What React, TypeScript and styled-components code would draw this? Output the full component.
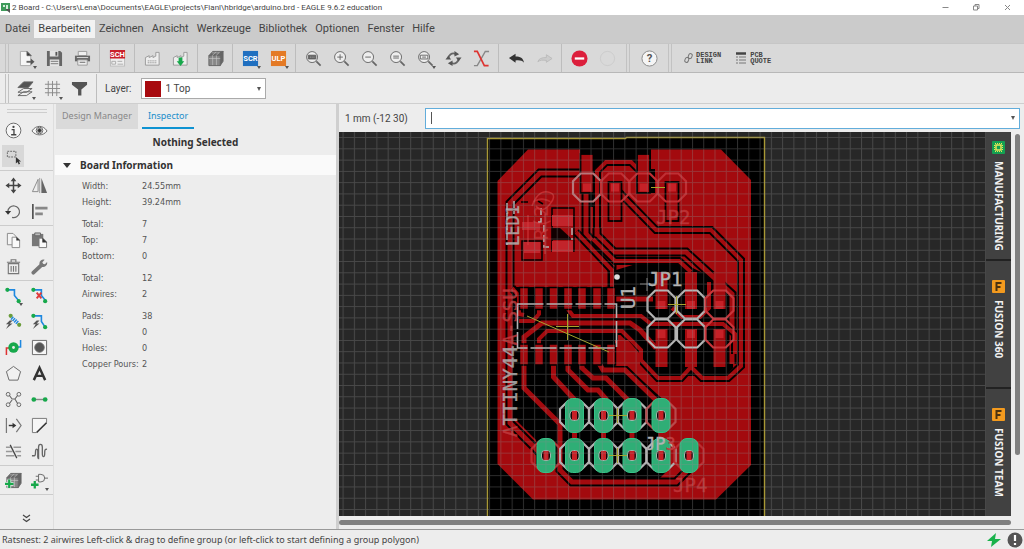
import React from "react";
import styled, { createGlobalStyle, css } from "styled-components";

const ui = 'Roboto, "DejaVu Sans Condensed", "Noto Sans", sans-serif';
const heading = '"Noto Sans", "Open Sans", sans-serif';

const GlobalStyle = createGlobalStyle`
  *, *::before, *::after { box-sizing: border-box; }
  body { margin: 0; font-family: ${ui}; color: #444; background: #ededed; }
  button, input, select { font: inherit; color: inherit; margin: 0; }
  button { border: 0; padding: 0; background: none; }
  svg { display: block; flex: none; }
`;

const Window = styled.div`
  display: flex;
  flex-direction: column;
  height: 100vh;
  overflow: hidden;
`;

const TitleBar = styled.header`
  display: flex;
  align-items: center;
  height: 15px;
  flex: none;
  padding: 0 12px 0 1px;
  gap: 1px;
  background: #fff;
  font-size: 8px;
  line-height: 15px;
  white-space: nowrap;
  h1 { margin: 0; flex: 1; font: inherit; color: #444; }
`;

const WindowButtons = styled.div`
  display: flex;
  gap: 22px;
  color: #888;
`;

const MenuBar = styled.nav`
  display: flex;
  align-items: center;
  height: 28px;
  flex: none;
  padding: 0 1px;
  background: #cbcbcb;
`;

const MenuItem = styled.button<{ $active?: boolean }>`
  height: 18px;
  padding: 0 4px;
  font-size: 11px;
  line-height: 18px;
  color: #444;
  background: ${(p) => (p.$active ? "#f2f2f2" : "transparent")};
`;

const Toolbar = styled.div<{ $light?: boolean }>`
  display: flex;
  align-items: center;
  flex: none;
  height: ${(p) => (p.$light ? "31px" : "30px")};
  padding-left: 5px;
  background: ${(p) => (p.$light ? "#ececec" : "#d9d9d9")};
  border-top: 1px solid ${(p) => (p.$light ? "#ececec" : "#c6c6c6")};
  border-bottom: 1px solid ${(p) => (p.$light ? "#cfcfcf" : "#b8b8b8")};
`;

const Handle = styled.span<{ $gap?: boolean }>`
  align-self: stretch;
  flex: none;
  width: 4px;
  margin: ${(p) => (p.$gap ? "0 5px" : "0 3px 0 0")};
  border: solid #c2c2c2;
  border-width: 0 1px;
`;

const Separator = styled.span`
  align-self: stretch;
  flex: none;
  width: 1px;
  margin: 0 3px;
  background: #bdbdbd;
`;

const ToolButton = styled.button<{ $narrow?: boolean }>`
  display: flex;
  align-items: center;
  justify-content: center;
  position: relative;
  flex: none;
  width: ${(p) => (p.$narrow ? "27px" : "28px")};
  height: 26px;
`;

const DropMark = styled.span`
  position: absolute;
  right: 3px;
  bottom: 2px;
  border: solid transparent;
  border-width: 3px 2px 0;
  border-top-color: #555;
`;

const LinkButton = styled.button`
  display: flex;
  align-items: center;
  gap: 3px;
  height: 26px;
  padding: 0 8px 0 7px;
  font-family: "Liberation Mono", monospace;
  font-size: 7px;
  line-height: 6px;
  font-weight: 700;
  text-align: left;
  white-space: pre;
`;

const LayerLabel = styled.label`
  display: flex;
  align-items: center;
  gap: 9px;
  padding-left: 5px;
  font-size: 10px;
`;

const LayerBox = styled.span`
  display: flex;
  align-items: center;
  width: 125px;
  height: 21px;
  padding: 0 4px 0 3px;
  background: #fff;
  border: 1px solid #aaa;
`;

const Swatch = styled.span`
  flex: none;
  width: 16px;
  height: 16px;
  margin-right: 5px;
  background: #a80a0f;
`;

const LayerSelect = styled.select`
  flex: 1;
  min-width: 0;
  appearance: none;
  border: 0;
  padding: 0;
  background: none;
  font-size: 10px;
  outline: none;
`;

const Arrow = styled.span`
  flex: none;
  border: solid transparent;
  border-width: 4px 2px 0;
  border-top-color: #555;
`;

const Workspace = styled.main`
  display: flex;
  flex: 1;
  min-height: 0;
`;

const Palette = styled.aside`
  display: flex;
  flex-direction: column;
  flex: none;
  width: 54px;
  padding-top: 5px;
  border-right: 1px solid #dedede;
`;

const PaletteGrip = styled.div`
  flex: none;
  height: 4px;
  margin: 0 6px 3px 7px;
  border: solid #cdcdcd;
  border-width: 1px 0;
`;

const ToolGroup = styled.div`
  display: grid;
  flex: none;
  grid-template-columns: 26px 26px;
  grid-auto-rows: 26px;
  padding: 1px 0;
  border-bottom: 1px solid #ccc;
`;

const PaletteButton = styled.button<{ $active?: boolean }>`
  display: flex;
  align-items: center;
  justify-content: center;
  position: relative;
  ${(p) =>
    p.$active &&
    css`
      margin: 2px;
      background: #d8d8d8;
    `}
`;

const MoreButton = styled.button`
  display: flex;
  justify-content: center;
  align-items: center;
  height: 20px;
  margin: auto 0 1px;
`;

const Inspector = styled.section`
  display: flex;
  flex-direction: column;
  flex: none;
  width: 285px;
  padding-left: 1px;
  border-right: 3px solid #cfcfcf;
`;

const TabList = styled.div`
  display: flex;
  gap: 4px;
  height: 25px;
  padding-left: 1px;
`;

const Tab = styled.button<{ $active?: boolean }>`
  padding: 0 6px;
  font-family: ${heading};
  font-size: 9px;
  line-height: 22px;
  color: ${(p) => (p.$active ? "#1b8ecb" : "#888")};
  background: ${(p) => (p.$active ? "none" : "#dadada")};
  border-bottom: 2px solid ${(p) => (p.$active ? "#0f93d2" : "#dadada")};
`;

const PanelTitle = styled.h2`
  margin: 0;
  font-family: ${heading};
  font-size: 10px;
  line-height: 26px;
  text-align: center;
  color: #333;
`;

const SectionHead = styled.button`
  display: flex;
  align-items: center;
  gap: 9px;
  height: 20px;
  padding-left: 8px;
  background: #fafafa;
  font-family: ${heading};
  font-weight: 700;
  font-size: 10px;
  color: #333;
`;

const Facts = styled.dl`
  display: grid;
  grid-template-columns: 60px 1fr;
  grid-auto-rows: 16px;
  margin: 0;
  padding: 6px 0 0 27px;
  font-family: "DejaVu Sans Condensed", "DejaVu Sans", sans-serif;
  font-size: 9px;
  line-height: 16px;
  color: #555;
  white-space: nowrap;
  &:first-of-type { padding-top: 3px; }
  dt, dd { margin: 0; }
`;

const Editor = styled.section`
  display: flex;
  flex-direction: column;
  flex: 1;
  min-width: 0;
`;

const CommandRow = styled.div`
  display: flex;
  align-items: center;
  flex: none;
  height: 28px;
  padding: 0 4px 0 6px;
  font-size: 10px;
`;

const Coordinates = styled.output`
  width: 80px;
  flex: none;
`;

const CommandBox = styled.div`
  display: flex;
  align-items: center;
  flex: 1;
  height: 21px;
  padding: 0 4px 0 5px;
  background: #fff;
  border: 1px solid #62addb;
  &::before { content: ""; width: 1px; height: 12px; background: #555; }
`;

const CommandInput = styled.input`
  flex: 1;
  min-width: 0;
  border: 0;
  outline: none;
  background: none;
  caret-color: transparent;
`;

const Stage = styled.div`
  display: flex;
  flex: 1;
  min-height: 0;
`;

const Canvas = styled.div`
  flex: 1;
  min-width: 0;
  overflow: hidden;
  background: #272727;
`;

const SideTabs = styled.div`
  display: grid;
  grid-auto-rows: 1fr;
  flex: none;
  width: 25px;
  background: #222;
  gap: 2px;
`;

const SideTab = styled.button<{ $inset: number }>`
  display: flex;
  align-items: center;
  gap: 7px;
  padding-top: ${(p) => p.$inset}px;
  writing-mode: vertical-rl;
  font-family: ${heading};
  font-size: 10px;
  line-height: 25px;
  font-weight: 700;
  color: #f2f2f2;
  background: #414141;
  white-space: nowrap;
`;

const VerticalTrack = styled.div`
  flex: none;
  width: 13px;
  padding: 2px 4px 0;
`;

const HorizontalTrack = styled.div`
  flex: none;
  height: 13px;
  padding: 4px 13px 0 0;
`;

const Thumb = styled.div<{ $vertical?: boolean }>`
  height: ${(p) => (p.$vertical ? "84%" : "5px")};
  border-radius: 3px;
  background: #808080;
`;

const StatusBar = styled.footer`
  display: flex;
  align-items: center;
  flex: none;
  height: 20px;
  padding: 0 1px 0 2px;
  gap: 5px;
  border-top: 1px solid #999;
  font-family: ${heading};
  font-size: 9px;
  white-space: nowrap;
  p { flex: 1; margin: 0; }
`;

/* ---------- icons ---------- */

type IconProps = { size?: number; children: React.ReactNode };
const Icon = ({ size = 17, children }: IconProps) => (
  <svg width={size} height={size} viewBox="0 0 18 18" fill="none" stroke="#666" strokeWidth="1" aria-hidden="true">
    {children}
  </svg>
);
const G = "#17a84b";
const B = "#1e88e0";

const Lens = ({ children }: { children?: React.ReactNode }) => (
  <Icon>
    <circle cx="7.5" cy="7.5" r="5.8" fill="#eee" />
    <path d="M12 12l4.5 4.5" strokeWidth="1.8" />
    {children}
  </Icon>
);
const Badge = ({ color, text }: { color: string; text: string }) => (
  <Icon>
    <rect x="1" y="1" width="16" height="16" fill={color} stroke="none" />
    <text x="9" y="12" textAnchor="middle" fontSize="8" fontWeight="700" fill="#fff" stroke="none">{text}</text>
  </Icon>
);
const Factory = ({ arrow }: { arrow?: boolean }) => (
  <Icon>
    <path d="M1.500 16V8l4-2v2l4-2v2l3-1.500V2.500h3.500V16z" fill="#eee" stroke="#999" />
    {arrow ? <path d="M7 8v4H5l4 5 4-5h-2V8z" fill={G} stroke="none" /> : <path d="M4 11.500h9M4 13.500h9" stroke="#777" strokeDasharray="1 1" />}
  </Icon>
);
const Box = ({ plus }: { plus?: boolean }) => (
  <Icon>
    <path d="M2 6l4-4.500h11l-3 4.500zM14 6l3-4.500V12l-3 4.500z" fill="#666" />
    <path d="M2 6h12v10.500H2z" fill="#888" />
    <path d="M5 3l8 0M6 6v10M10 6v10M2 9h12M5.500 6l4-4M9.500 6l4-4" stroke="#ccc" strokeWidth=".6" />
    {plus && <path d="M0 12.500h9M4.500 8v9" stroke="#eee" strokeWidth="4" />}
    {plus && <path d="M0 12.500h9M4.500 8v9" stroke={G} strokeWidth="2.400" />}
  </Icon>
);

const DocIcon = () => <Icon><path d="M2.500 1.500h7l4 4v11h-11z" fill="#f6f6f6" stroke="#aaa" /><path d="M9.500 1.500l4.500 4.500h-4.500z" fill="#333" /><path d="M9 12.500h6" strokeWidth="2" /><path d="M13.500 9l4 3.500-4 3.500z" fill="#555" stroke="none" /></Icon>;
const SaveIcon = () => <Icon><path d="M1 1h14l2 2v14H1z" fill="#666" stroke="none" /><path d="M4 1h9v6H4zM4 10h10v7H4z" fill="#e4e4e4" stroke="none" /><path d="M10 2h2v4h-2z" fill="#555" stroke="none" /><path d="M5 12h8M5 14.500h8" stroke="#777" /></Icon>;
const PrintIcon = () => <Icon><path d="M4.500 1.500h9V6h-9z" fill="#eee" stroke="#999" /><rect x="1" y="6" width="16" height="6" fill="#666" stroke="none" /><path d="M3 8h12" stroke="#ddd" /><path d="M4 10.500h10v5.500H4z" fill="#eee" stroke="#999" /><path d="M6 13h6" /></Icon>;
const SchIcon = () => <Icon><rect x="1.500" y="1" width="15" height="16" fill="#eee" stroke="#bbb" /><rect x="1" y="0" width="16" height="9" fill="#c9202b" stroke="none" /><text x="9" y="7.500" textAnchor="middle" fontSize="8" fontWeight="700" fill="#fff" stroke="none">SCH</text><path d="M3 12h4v3H3zM9 12h5M9 15h6" stroke="#aaa" /></Icon>;
const RefreshIcon = () => <Icon><path d="M3.500 9.500A5.500 5.500 0 0 1 11 4M14.500 8.500A5.500 5.500 0 0 1 7 14" strokeWidth="2" /><path d="M10 1l5 3.500-5 2.500zM8 11l-5 3 5 3zM0.500 10h6L3.500 6zM11.500 8h6l-3 4z" fill="#555" stroke="none" /></Icon>;
const RatsnestIcon = () => <Icon><path d="M1 16.500h3.500L13 1.500h4" stroke="#888" strokeWidth="1.500" /><path d="M1 1.500h3.500L12 16.500h4.500" stroke="#dd3431" strokeWidth="1.800" /></Icon>;
const UndoIcon = ({ muted }: { muted?: boolean }) => <Icon>{muted ? <path d="M17 9l-6-4v3C6 8 3 9 2 12.500c2-2 5-2 9-1.500v2z" fill="#ccc" stroke="#bbb" /> : <path d="M1 8.500l7-4.500v3c5 0 8 1.500 9 6.500-2-2.500-5-3-9-2.500v2.500z" fill="#333" stroke="none" />}</Icon>;
const StopIcon = () => <Icon><circle cx="9" cy="9" r="8.500" fill="#dc1f3c" stroke="none" /><path d="M4 9h10" stroke="#fff" strokeWidth="2.400" /></Icon>;
const GoIcon = () => <Icon><circle cx="9" cy="9" r="7.500" stroke="#cbcbcb" /></Icon>;
const HelpIcon = () => <Icon><circle cx="9" cy="9" r="8" fill="#f5f5f5" stroke="#888" /><text x="9" y="13" textAnchor="middle" fontSize="12" fontWeight="700" fill="#555" stroke="none">?</text></Icon>;
const LayersIcon = () => <Icon><path d="M1 16.500l6-4h9l-6 4zM1 13l6-4h9l-6 4z" fill="#eee" /><path d="M1 8l6-6h10l-5 6z" fill="#555" /></Icon>;
const GridIcon = () => <Icon><path d="M4.500 1v16M9 1v16M13.500 1v16M1 4.500h16M1 9h16M1 13.500h16" stroke="#888" /></Icon>;
const FunnelIcon = () => <Icon><path d="M1 2h16v3l-6 5v6.500H7.500V10L1 5z" fill="#555" stroke="none" /></Icon>;

const paletteGroups: { name: string; icon: React.ReactNode; active?: boolean; drop?: boolean }[][] = [
  [
    { name: "Info", icon: <Icon><circle cx="9" cy="9" r="7.800" fill="#f6f6f6" /><circle cx="9" cy="5.200" r="1.200" fill="#444" stroke="none" /><path d="M7 8h2.500v5.500M6.500 13.500h5.500" stroke="#444" strokeWidth="1.400" /></Icon> },
    { name: "Show", icon: <Icon><path d="M1 9.500c4-6.500 12-6.500 16 0-4 5.500-12 5.500-16 0z" fill="#f6f6f6" /><circle cx="9" cy="9" r="3.500" /><circle cx="9" cy="9" r="2" fill="#333" /></Icon> },
    { name: "Group", active: true, icon: <Icon><path d="M2.500 3.500h9v6h-9z" stroke="#666" strokeDasharray="2 1" /><path d="M11.500 9.500v7l1.800-1.600 1.200 2.600 1.500-.8-1.300-2.500h2.300z" fill="#333" stroke="none" /></Icon> },
  ],
  [
    { name: "Move", icon: <Icon><path d="M9 3v12M3 9h12" strokeWidth="1.600" stroke="#444" /><path d="M9 0.500l3 4H6zM9 17.500l3-4H6zM.5 9l4-3v6zM17.500 9l-4-3v6z" fill="#444" stroke="none" /></Icon> },
    { name: "Mirror", icon: <Icon><path d="M7.500 2.500v13h-6z" stroke="#888" /><path d="M11 1v16h6z" fill="#666" stroke="none" /><path d="M9.200 1v16" stroke="#999" /></Icon> },
    { name: "Rotate", icon: <Icon><path d="M3 9a6.200 6.200 0 1 1 4.500 6.300" strokeWidth="1.300" /><path d="M0 8.500h6.500L3.200 12.500z" fill="#333" stroke="none" /></Icon> },
    { name: "Align", icon: <Icon><path d="M2 1v16" stroke="#333" strokeWidth="1.500" /><path d="M4.500 5.500h13M4.500 11.500h8" stroke="#888" strokeWidth="3" /></Icon> },
  ],
  [
    { name: "Copy", icon: <Icon><path d="M2.500 1.500h6l3 3v9h-9z" fill="#f4f4f4" stroke="#888" /><path d="M7.500 5.500h5l3 3v8h-8z" fill="#fafafa" stroke="#888" /><path d="M12 5l4 4h-4z" fill="#333" stroke="none" /></Icon> },
    { name: "Paste", icon: <Icon><path d="M1 2h12v13H1z" fill="#777" stroke="none" /><path d="M4 1h6v3H4z" fill="#bbb" stroke="#666" /><path d="M8.500 6.500h4l4 4v6h-8z" fill="#fafafa" stroke="#777" /><path d="M12 6l5 5h-5z" fill="#333" stroke="none" /></Icon> },
    { name: "Delete", icon: <Icon><path d="M3.500 6h11v10.500h-11zM2 4.500h14M6.500 4V1.800h5V4M6.500 8.500v6M9 8.500v6M11.500 8.500v6" stroke="#777" strokeWidth="1.200" /></Icon> },
    { name: "Change", icon: <Icon><path d="M2.500 15.500L11 7.500" strokeWidth="4" stroke="#777" strokeLinecap="round" /><path d="M15.500 2.500L12.500 6M9 6.500A4.200 4.200 0 0 1 14.500 1.800L12 4.500l.7 1.700 2 .5 2.300-2.500A4.200 4.200 0 0 1 11 9z" fill="#777" stroke="none" /></Icon> },
  ],
  [
    { name: "Route", drop: true, icon: <Icon><path d="M2 3h8v6l5 6" stroke={B} strokeWidth="1.700" /><circle cx="2.500" cy="3" r="2.200" fill={G} stroke="none" /><circle cx="14.500" cy="15" r="2.200" fill={G} stroke="none" /></Icon> },
    { name: "Ripup", icon: <Icon><path d="M2 3h9v6l5 6" stroke={B} strokeWidth="1.700" /><circle cx="2.500" cy="3" r="2.200" fill={G} stroke="none" /><circle cx="15" cy="15" r="2.200" fill={G} stroke="none" /><path d="M6 6l5 6M11 6l-5 6" stroke="#df3b3b" strokeWidth="2" /></Icon> },
    { name: "Quick route", icon: <Icon><circle cx="6" cy="3" r="2.200" fill="#6a9c3b" stroke="none" /><circle cx="15" cy="12.500" r="2.200" fill="#6a9c3b" stroke="none" /><path d="M7 5l7 6" stroke={B} strokeWidth="4" strokeDasharray="1.500 .8" /><path d="M5 8l-4 4h3l-3 5 7-6H5l3-3z" fill="#555" stroke="none" /></Icon> },
    { name: "Quick airwire", icon: <Icon><path d="M2 3h9v6l4 6" stroke={B} strokeWidth="1.700" /><circle cx="2.500" cy="3" r="2.200" fill={G} stroke="none" /><circle cx="15" cy="15" r="2.200" fill={G} stroke="none" /><path d="M6 8l-4 4h3l-3 5 7-6H6l3-3z" fill="#555" stroke="none" /></Icon> },
    { name: "Via", icon: <Icon><path d="M1.500 17V9.500H6" stroke="#d33" strokeWidth="1.600" /><path d="M16.500 1v7.500H12" stroke={B} strokeWidth="1.600" /><circle cx="9" cy="9" r="5.500" fill={G} stroke="none" /><circle cx="9" cy="9" r="1.500" fill="#eee" stroke="none" /></Icon> },
    { name: "Hole", icon: <Icon><path d="M1.500 1.500h15v15h-15z" fill="#f6f6f6" /><circle cx="9" cy="9" r="5" fill="#555" /></Icon> },
    { name: "Polygon", icon: <Icon><path d="M9 1.500l7.500 5.500-2.800 9H4.300L1.500 7z" fill="#f1f1f1" /></Icon> },
    { name: "Text", icon: <Icon><path d="M3 16L9 3l6 13M5.500 11.500h7" strokeWidth="2.600" stroke="#333" /></Icon> },
    { name: "Fanout", icon: <Icon><path d="M4.500 4.500l3 4h3l3-4M4.500 13.500l3-4M13.500 13.500l-3-5" strokeWidth="1.200" /><circle cx="3.300" cy="3.500" r="2" /><circle cx="14.700" cy="3.500" r="2" /><circle cx="3.300" cy="14.500" r="2" /><circle cx="14.700" cy="14.500" r="2" /></Icon> },
    { name: "Signal", icon: <Icon><path d="M3 9h12" stroke="#888" strokeWidth="1.500" /><circle cx="3" cy="9" r="2.500" fill={G} stroke="none" /><circle cx="15" cy="9" r="2.500" fill={G} stroke="none" /></Icon> },
    { name: "Split", icon: <Icon><path d="M1.500 1v16M12 2l5 7-5 7" stroke="#777" strokeWidth="1.300" /><path d="M4 9h5" stroke="#333" strokeWidth="1.500" /><path d="M8 6l4 3-4 3z" fill="#333" stroke="none" /></Icon> },
    { name: "Miter", icon: <Icon><path d="M1.500 16.500v-15h15v4l-11 11z" fill="#f6f6f6" stroke="#777" /><path d="M6 16.500L16.500 6" stroke="#333" strokeWidth="1.500" /></Icon> },
    { name: "Slice", icon: <Icon><path d="M1 4.500h5M9 4.500h8M1 9h7M11 9h6M1 13.500h9M13 13.500h4" stroke="#999" strokeWidth="1.500" /><path d="M5.500 2l7 14" stroke="#444" strokeWidth="1.300" /></Icon> },
    { name: "Meander", icon: <Icon><path d="M1 13.500h2.500c2.500 0 0-7 2.500-7s0 10 2 10V4.500c0-4 4-4 4 0v7c0 4 2.500 4 2.500 0s0-5 2.500-5" stroke="#666" strokeWidth="1.400" /></Icon> },
  ],
  [
    { name: "Add part", icon: <Box plus /> },
    { name: "Add gate", drop: true, icon: <Icon><path d="M8 2.500h2.500a3.500 3.500 0 0 1 0 8H8zM5 4.500h3M5 8.500h3M14 6.500h4" /><path d="M0 13.500h8M4 9.500v8" stroke={G} strokeWidth="2.400" /></Icon> },
  ],
];

const ChipIcon = () => <svg width="13" height="13" viewBox="0 0 13 13"><rect width="13" height="13" rx="1" fill="#14a052" /><rect x="4" y="4" width="5" height="5" fill="none" stroke="#e8e65a" strokeWidth="1.500" /><path d="M3 2.500h7M3 10.500h7M2.500 4v5M10.500 4v5" stroke="#e8e65a" strokeDasharray="1 1" /></svg>;
const FusionIcon = () => <svg width="13" height="13" viewBox="0 0 13 13"><rect width="13" height="13" rx="1" fill="#f39a1e" /><path d="M4.500 11V3h5M4.500 7h4" fill="none" stroke="#4b3210" strokeWidth="2" /></svg>;

/* ---------- board drawing ---------- */

const RED = "#a30a0e";
const SILK = "#b4b4b4";

const Trace = ({ d, w = 5 }: { d: string; w?: number }) => (
  <g fill="none" strokeLinejoin="miter">
    <path d={d} stroke="#050000" strokeWidth={w + 4} />
    <path d={d} stroke={RED} strokeWidth={w} />
  </g>
);
const octagon = (x: number, y: number, r = 14) => {
  const k = r * 0.45;
  return `M${x - k} ${y - r}h${2 * k}l${r - k} ${r - k}v${2 * k}l${k - r} ${r - k}h${-2 * k}l${k - r} ${k - r}v${-2 * k}z`;
};
const upperPads = [574.5, 603.5, 632, 661];
const lowerPads = [546, 574.5, 603.5, 632, 661, 689];
const pins = [524, 539, 553.5, 568, 582, 597, 611];
const jp1 = [661.5, 691, 719.5];
const jp2 = [587, 615, 643.5, 672];

const ThroughPad = ({ x, y }: { x: number; y: number }) => (
  <g>
    <rect x={x - 9} y={y - 17} width="18" height="34" rx="7" fill="#2fae76" stroke="#35c287" />
    <rect x={x - 4.5} y={y - 5} width="9" height="10" rx="3.500" fill="#120808" stroke="#bfcfc6" strokeWidth=".8" />
    <rect x={x - 2.5} y={y - 4.5} width="5" height="9" fill="#c81f26" />
  </g>
);

const BoardDrawing = () => (
  <svg width="100%" height="100%" role="img" aria-label="Board layout">
    <defs>
      <pattern id="grid" x="489.100" y="137.100" width="11.270" height="11.270" patternUnits="userSpaceOnUse">
        <path d="M0 .5h11.270M.5 0v11.270" stroke="#8a8a8a" strokeOpacity=".34" strokeWidth="1" fill="none" />
      </pattern>
    </defs>
    <g transform="translate(-339 -132)">
      <rect x="487" y="138" width="277" height="400" fill="#000" />
      <path d="M528 149.500H721L751 180V465L716 499.500H533L497.500 464V181z" fill={RED} />

      {/* clearances in the copper pour */}
      <path d="M580 149h71v20h4v24h-15l-8-24h-30l-6 10v28h-8v-15h-8z" fill="#000" />
      <path d="M594 172l10-12h30l8 10v24H600v40h-6z" fill={RED} />
      <path d="M514 287h104v59l-6 20 16 2 38 34 3 24-11 14 10 30-8 8h-90l-18-12h-16v-26l-22-22z" fill="#000" />
      <path d="M616 290V270l20-6h48l30 14 19 12v78l-8 8h-64l-18-16v-8l-17-17h-10z" fill="#000" />

      {/* routed traces */}
      <Trace d="M583 173H540L510 203V423L545 458" />
      <Trace d="M586 188v46l26 30v26" />
      <Trace d="M597 230V171l9-9h25l9 9v16" w={4} />
      <Trace d="M597 228v7l17 17h72l46 42v70" w={5} />
      <Trace d="M576 232l36 38v18" w={4} />
      <Trace d="M593 239l22 22h64l12 11" w={4} />
      <Trace d="M617 190l39 40h55l30 30v106l-13 12h-26l-11-11-10 11h-23l-17-18v-10l-19-19H547l-8 8v8" w={4} />
      <Trace d="M568 309l5 7h68l10 8h72l12 10v20" w={4} />
      <Trace d="M524 345v-8l18-14h88l10 7 16 18" w={5} />
      <Trace d="M539 305v9l-6 7h-14" w={4} />
      <Trace d="M512 288l7 8v18l5 1" w={4} />
      <Trace d="M611 299h42" />
      <Trace d="M524 362v26l36 36v46l12 12h104l14-14" />
      <Trace d="M553.500 360v17l25 27" />
      <Trace d="M568 360v10l20 20h10l8 9v8" />
      <Trace d="M582 360v8l11 10h13l28 28" />
      <Trace d="M597 360l6 10h22l37 36" />
      <path d="M615 340h13l12 14v12h-25z" fill={RED} />
      <path d="M672 308l10 9h18l9-9V282" fill="none" stroke={RED} strokeWidth="4" />
      {upperPads.map((x) => <path key={x} d={`M${x} 415v40`} stroke={RED} strokeWidth="5" />)}

      {/* surface pads */}
      <g fill={RED} stroke="#000" strokeWidth="1.500">
        {pins.map((x) => (
          <g key={x}>
            <rect x={x - 4.5} y="287.500" width="9" height="22" />
            <rect x={x - 4.5} y="344" width="9" height="21" />
          </g>
        ))}
      </g>
      {jp1.map((x) => (
        <g key={x} fill={RED}>
          <rect x={x - 6} y="272" width="12" height="37" />
          <rect x={x - 6} y="329" width="12" height="38" />
          <rect x={x - 4} y="301" width="8" height="8" fill="#c62127" />
          <rect x={x - 4} y="330" width="8" height="8" fill="#c62127" />
        </g>
      ))}
      {jp2.map((x, i) => (
        <g key={x}>
          <rect x={x - 6.5} y={i % 2 ? 182 : 154} width="13" height="39" fill={RED} stroke="#000" strokeWidth="1.800" />
          <rect x={x - 4} y="183.500" width="8" height="8" fill="#c62127" />
        </g>
      ))}

      {/* small components at the upper left */}
      <path d="M522 241h20v19h-20zM552 208h22v43h-22zM521 202h7M538 201l5 3" fill="none" stroke="#000" strokeWidth="1.500" />
      <path d="M552 228h8l13 12h-21z" fill="#100" />
      <path d="M552 215h21v11h-21zM552 241h21v11h-21zM524 242h16v11h-16zM522 222h18v8h-18z" fill="#c2242b" />
      <path d="M541 208v14h-4M544 225v22h7M572 228v12M507 203v42M514 201v13" fill="none" stroke={SILK} strokeWidth="1.500" strokeDasharray="7 3" />
      <path d="M532 206q6-16 16-14t2 12-14 2M545 214v40M528 215v30" fill="none" stroke="#cf3a3d" strokeOpacity=".7" strokeWidth="1.500" />

      {/* silkscreen */}
      <g fill="none" strokeWidth="2.200">
        {jp2.map((x, i) => <path key={x} d={octagon(x, 187.5)} stroke={i ? "#c02f34" : "#b7777a"} />)}
        {jp1.map((x, i) => (
          <g key={x} stroke={i === 2 ? "#c8353a" : SILK}>
            <path d={octagon(x, 304.5)} />
            <path d={octagon(x, 333.5)} />
          </g>
        ))}
        {upperPads.map((x, i) => <path key={x} d={octagon(x, 415.5, 14.5)} stroke={i === 3 ? "#b8494b" : SILK} />)}
        {lowerPads.map((x, i) => <path key={x} d={octagon(x, 455.5, 14.5)} stroke={i === 0 || i === 5 ? "#bb2c30" : SILK} />)}
        <path d="M517.500 304h99v44h-99z" stroke={SILK} strokeDasharray="26 3" strokeWidth="1.600" />
      </g>
      <circle cx="617" cy="277" r="2.800" fill="#ddd" />
      {upperPads.map((x) => <ThroughPad key={x} x={x} y={415.5} />)}
      {lowerPads.map((x) => <ThroughPad key={x} x={x} y={455.5} />)}

      <g fontFamily='"DejaVu Sans Mono", monospace' fontSize="19" fill={SILK} stroke={SILK} strokeWidth=".4">
        <text x="648" y="286">JP1</text>
        <text x="656" y="224" fill="#c23a3d" stroke="#c23a3d" opacity=".8">JP2</text>
        <text x="645" y="450" fontSize="17">JP<tspan fill="#c23a3d" stroke="#c23a3d">3</tspan></text>
        <text x="673" y="492" fill="#c23a3d" stroke="#c23a3d" opacity=".8">JP4</text>
        <text transform="translate(635 309) rotate(-90)">U1</text>
        <text transform="translate(519 246) rotate(-90)" fontSize="17" opacity=".85">LED1</text>
        <text transform="translate(548 240) rotate(-90)" fill="#cf3a3d" stroke="none" opacity=".6">R(2)</text>
        <text transform="translate(517 437) rotate(-90)" opacity=".85">
          <tspan fill="#c23a3d" stroke="#c23a3d">A</tspan>TTINY44<tspan fill="#c23a3d" stroke="#c23a3d">A-SSU</tspan>
        </text>
      </g>

      <path d="M640 284h14M647 278v13" stroke={SILK} strokeOpacity=".7" />
      <g stroke="#a8a52c" fill="none">
        <path d="M556 326.500h23M567.500 314v26M527 316l82 36" />
        <path d="M651 187.500h14M668 304.500h18M676.500 296v18M609 415.500h18M617.500 408v15M609 455.500h18M617.500 448v15" />
      </g>
      <path d="M487.500 540V138.500h138l1-1h138V540" fill="none" stroke="#a89835" strokeWidth="1.400" />
      <rect x="339" y="132" width="3000" height="2000" fill="url(#grid)" />
    </g>
  </svg>
);

const Tool = ({ name, drop, narrow, children }: { name: string; drop?: boolean; narrow?: boolean; children: React.ReactNode }) => (
  <ToolButton aria-label={name} $narrow={narrow}>
    {children}
    {drop && <DropMark />}
  </ToolButton>
);

const menus = ["Datei", "Bearbeiten", "Zeichnen", "Ansicht", "Werkzeuge", "Bibliothek", "Optionen", "Fenster", "Hilfe"];

const facts = [
  [["Width:", "24.55mm"], ["Height:", "39.24mm"]],
  [["Total:", "7"], ["Top:", "7"], ["Bottom:", "0"]],
  [["Total:", "12"], ["Airwires:", "2"]],
  [["Pads:", "38"], ["Vias:", "0"], ["Holes:", "0"], ["Copper Pours:", "2"]],
];

export default function App() {
  return (
    <Window>
      <GlobalStyle />
      <TitleBar>
        <svg width="10" height="12" viewBox="0 0 10 12"><rect y="1" width="9" height="8" fill="#3f9b5b" /><path d="M2 3h2v2H2zM5 3h2v4H5z" fill="#d8eedd" /><path d="M4 7h5v4z" fill="#555" /></svg>
        <h1>2 Board - C:\Users\Lena\Documents\EAGLE\projects\Fianl\hbridge\arduino.brd - EAGLE 9.6.2 education</h1>
        <WindowButtons>
          <button aria-label="Minimize"><svg width="9" height="9" viewBox="0 0 9 9" stroke="#888"><path d="M1.500 4.500h6" /></svg></button>
          <button aria-label="Restore"><svg width="9" height="9" viewBox="0 0 9 9" stroke="#888" fill="none"><path d="M1.500 3h4v4h-4zM3 3V1.500h4v4H5.500" /></svg></button>
          <button aria-label="Close"><svg width="9" height="9" viewBox="0 0 9 9" stroke="#888"><path d="M2 2l5 5M7 2l-5 5" /></svg></button>
        </WindowButtons>
      </TitleBar>

      <MenuBar>
        {menus.map((m) => <MenuItem key={m} $active={m === "Bearbeiten"}>{m}</MenuItem>)}
      </MenuBar>

      <Toolbar role="toolbar">
        <Handle />
        <Tool name="New" drop><DocIcon /></Tool>
        <Tool name="Save"><SaveIcon /></Tool>
        <Tool name="Print"><PrintIcon /></Tool>
        <Separator />
        <Tool name="Schematic"><SchIcon /></Tool>
        <Separator />
        <Tool name="Manufacture"><Factory /></Tool>
        <Tool name="Export manufacturing files"><Factory arrow /></Tool>
        <Separator />
        <Tool name="Libraries"><Box /></Tool>
        <Separator />
        <Tool name="Script" drop><Badge color="#1f6fc0" text="SCR" /></Tool>
        <Tool name="User program" drop><Badge color="#e47a25" text="ULP" /></Tool>
        <Separator />
        <Tool name="Zoom fit"><Lens><path d="M3.500 5.500h8v4h-8z" fill="#555" /><path d="M5 7.500h5" stroke="#ddd" strokeDasharray="1 1" /></Lens></Tool>
        <Tool name="Zoom in"><Lens><path d="M4.500 7.500h6M7.500 4.500v6" /></Lens></Tool>
        <Tool name="Zoom out"><Lens><path d="M4.500 7.500h6" /></Lens></Tool>
        <Tool name="Zoom redraw"><Lens><path d="M4.500 6.500h6M4.500 8.500h6" /></Lens></Tool>
        <Tool name="Zoom select" drop><Lens><path d="M3.500 5.500h8v4h-8zM5.500 7.500h4" /></Lens></Tool>
        <Tool name="Refresh"><RefreshIcon /></Tool>
        <Tool name="Ratsnest"><RatsnestIcon /></Tool>
        <Separator />
        <Tool name="Undo"><UndoIcon /></Tool>
        <Tool name="Redo"><UndoIcon muted /></Tool>
        <Separator />
        <Tool name="Stop"><StopIcon /></Tool>
        <Tool name="Go"><GoIcon /></Tool>
        <Handle $gap />
        <Tool name="Help"><HelpIcon /></Tool>
        <Handle $gap />
        <LinkButton>
          <svg width="9" height="10" viewBox="0 0 9 10" fill="none" stroke="#777"><rect x="4.500" y=".5" width="3.500" height="5" rx="1.700" transform="rotate(20 6 3)" /><rect x="1" y="4.500" width="3.500" height="5" rx="1.700" transform="rotate(20 3 7)" /></svg>
          {"DESIGN\nLINK"}
        </LinkButton>
        <LinkButton>
          <svg width="11" height="12" viewBox="0 0 11 12" stroke="#777"><path d="M0 1.500h10" strokeWidth="2.500" stroke="#444" /><path d="M0 5h10M0 8h10M0 11h10" strokeDasharray="2 1 7" /></svg>
          {"PCB\nQUOTE"}
        </LinkButton>
      </Toolbar>

      <Toolbar role="toolbar" $light>
        <Handle />
        <Tool name="Layers" drop narrow><LayersIcon /></Tool>
        <Tool name="Grid" drop narrow><GridIcon /></Tool>
        <Tool name="Filter" narrow><FunnelIcon /></Tool>
        <Separator />
        <LayerLabel>
          Layer:
          <LayerBox>
            <Swatch />
            <LayerSelect defaultValue="1 Top"><option>1 Top</option></LayerSelect>
            <Arrow />
          </LayerBox>
        </LayerLabel>
      </Toolbar>

      <Workspace>
        <Palette>
          <PaletteGrip />
          {paletteGroups.map((group, i) => (
            <ToolGroup key={i}>
              {group.map((t) => (
                <PaletteButton key={t.name} aria-label={t.name} $active={t.active}>
                  {t.icon}
                  {t.drop && <DropMark />}
                </PaletteButton>
              ))}
            </ToolGroup>
          ))}
          <MoreButton aria-label="More tools">
            <svg width="9" height="9" viewBox="0 0 9 9" fill="none" stroke="#444" strokeWidth="1.200"><path d="M1 1l3.500 2.500L8 1M1 5l3.500 2.500L8 5" /></svg>
          </MoreButton>
        </Palette>

        <Inspector>
          <TabList role="tablist">
            <Tab role="tab">Design Manager</Tab>
            <Tab role="tab" aria-selected $active>Inspector</Tab>
          </TabList>
          <PanelTitle>Nothing Selected</PanelTitle>
          <SectionHead>
            <svg width="8" height="5" viewBox="0 0 8 5"><path d="M0 0h8L4 5z" fill="#333" /></svg>
            Board Information
          </SectionHead>
          {facts.map((group, i) => (
            <Facts key={i}>
              {group.map(([k, v]) => (
                <React.Fragment key={k}>
                  <dt>{k}</dt>
                  <dd>{v}</dd>
                </React.Fragment>
              ))}
            </Facts>
          ))}
        </Inspector>

        <Editor>
          <CommandRow>
            <Coordinates>1 mm (-12 30)</Coordinates>
            <CommandBox>
              <CommandInput aria-label="Command" />
              <Arrow />
            </CommandBox>
          </CommandRow>
          <Stage>
            <Canvas><BoardDrawing /></Canvas>
            <SideTabs>
              <SideTab $inset={9}><ChipIcon />MANUFACTURING</SideTab>
              <SideTab $inset={19}><FusionIcon />FUSION 360</SideTab>
              <SideTab $inset={19}><FusionIcon />FUSION TEAM</SideTab>
            </SideTabs>
            <VerticalTrack><Thumb $vertical /></VerticalTrack>
          </Stage>
          <HorizontalTrack><Thumb /></HorizontalTrack>
        </Editor>
      </Workspace>

      <StatusBar>
        <p>Ratsnest: 2 airwires Left-click &amp; drag to define group (or left-click to start defining a group polygon)</p>
        <svg width="16" height="16" viewBox="0 0 16 16"><path d="M10 1L1 9h5l-1 6 10-8H9z" fill="#19b24b" /></svg>
        <svg width="16" height="16" viewBox="0 0 16 16"><circle cx="8" cy="8" r="7.500" fill="#555" /><path d="M8 3v6M8 11v2" stroke="#fff" strokeWidth="2.200" /></svg>
      </StatusBar>
    </Window>
  );
}
